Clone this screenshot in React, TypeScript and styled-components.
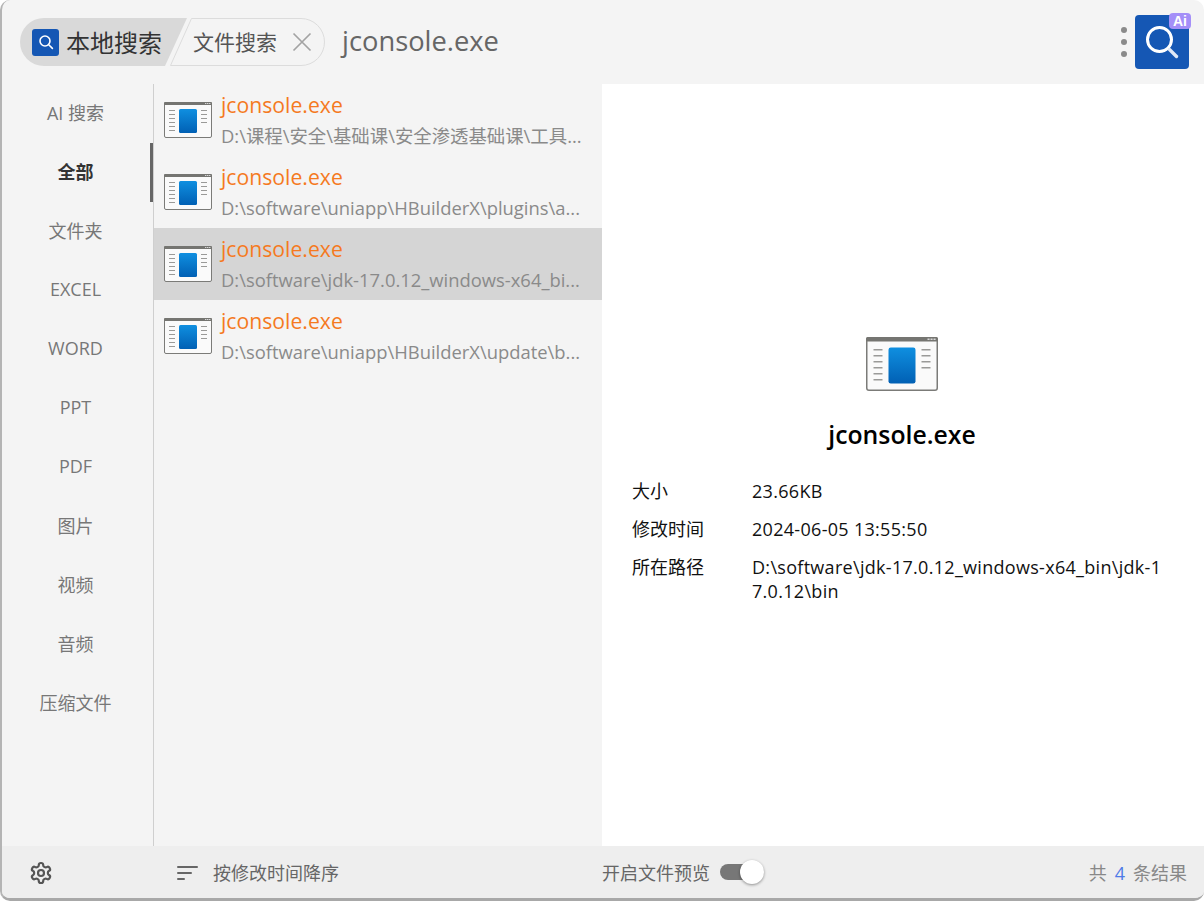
import styled, { createGlobalStyle } from 'styled-components';

const GlobalStyle = createGlobalStyle`
  html, body {
    margin: 0;
    padding: 0;
    background: #ffffff;
  }
  * {
    box-sizing: border-box;
  }
`;

const categories = ['AI 搜索', '全部', '文件夹', 'EXCEL', 'WORD', 'PPT', 'PDF', '图片', '视频', '音频', '压缩文件'];

const results = [
  { name: 'jconsole.exe', path: 'D:\\课程\\安全\\基础课\\安全渗透基础课\\工具...' },
  { name: 'jconsole.exe', path: 'D:\\software\\uniapp\\HBuilderX\\plugins\\a...' },
  { name: 'jconsole.exe', path: 'D:\\software\\jdk-17.0.12_windows-x64_bi...', selected: true },
  { name: 'jconsole.exe', path: 'D:\\software\\uniapp\\HBuilderX\\update\\b...' },
];

function ExeIcon({ width }: { width: number }) {
  return (
    <svg width={width} height={(width * 3) / 4} viewBox="0 0 48 36">
      <defs>
        <linearGradient id="exeBlue" x1="0" y1="0" x2="0" y2="1">
          <stop offset="0" stopColor="#0f8fe0" />
          <stop offset="1" stopColor="#0160b4" />
        </linearGradient>
      </defs>
      <rect x="0.5" y="0.5" width="47" height="35" rx="1.5" fill="#fafafa" stroke="#7b7b78" />
      <rect x="0" y="0" width="48" height="3" rx="1" fill="#757571" />
      <rect x="41" y="1" width="1.4" height="1" fill="#d8d8d8" />
      <rect x="43" y="1" width="1.4" height="1" fill="#d8d8d8" />
      <rect x="45" y="1" width="1.4" height="1" fill="#d8d8d8" />
      <rect x="15" y="7" width="18" height="24" rx="1.5" fill="url(#exeBlue)" />
      <g fill="#9a9a98">
        <rect x="5" y="8" width="6" height="1" />
        <rect x="5" y="12" width="6" height="1" />
        <rect x="5" y="16" width="6" height="1" />
        <rect x="5" y="20" width="6" height="1" />
        <rect x="5" y="24" width="6" height="1" />
        <rect x="5" y="28" width="6" height="1" />
        <rect x="37" y="8" width="6" height="1" />
        <rect x="37" y="12" width="6" height="1" />
        <rect x="37" y="16" width="6" height="1" />
        <rect x="37" y="20" width="6" height="1" />
      </g>
    </svg>
  );
}

export default function App() {
  return (
    <>
      <GlobalStyle />
      <Page>
        <Window>
          <Header>
            <Tabs>
              <LocalTab>
                <LocalBadge>
                  <svg width="18" height="18" viewBox="0 0 18 18" fill="none" stroke="#ffffff" strokeWidth="1.6" strokeLinecap="round">
                    <circle cx="8" cy="8" r="5" />
                    <path d="M12 12l3.4 3.4" />
                  </svg>
                </LocalBadge>
                <TabLabel>本地搜索</TabLabel>
              </LocalTab>
              <FileTab>
                <TabOutline width="156" height="48" viewBox="0 0 156 48" fill="none">
                  <path d="M22.5 .5H132a23.5 23.5 0 0 1 0 47H1.5Z" stroke="#dcdcdc" />
                </TabOutline>
                <TabLabel>文件搜索</TabLabel>
                <svg width="20" height="20" viewBox="0 0 20 20" stroke="#a3a3a3" strokeWidth="1.7">
                  <path d="M1.5 1.5l17 17M18.5 1.5l-17 17" />
                </svg>
              </FileTab>
            </Tabs>
            <Query>jconsole.exe</Query>
            <MoreDots>
              <span />
              <span />
              <span />
            </MoreDots>
            <AiButton>
              <svg width="36" height="36" viewBox="0 0 36 36" fill="none" stroke="#ffffff" strokeLinecap="round">
                <circle cx="15.5" cy="15.5" r="12" strokeWidth="3" />
                <path d="M25.5 25.5l7 7" strokeWidth="3.4" stroke="#dfe8f6" />
              </svg>
              <AiTag>Ai</AiTag>
            </AiButton>
          </Header>
          <Body>
            <Sidebar>
              {categories.map((name) => (
                <Category key={name} $active={name === '全部'}>
                  <CategoryLabel>{name}</CategoryLabel>
                </Category>
              ))}
            </Sidebar>
            <ResultList>
              {results.map((item) => (
                <ResultRow key={item.path} $selected={item.selected}>
                  <ExeIcon width={48} />
                  <ResultText>
                    <ResultName>{item.name}</ResultName>
                    <ResultPath>{item.path}</ResultPath>
                  </ResultText>
                </ResultRow>
              ))}
            </ResultList>
            <Preview>
              <ExeIcon width={72} />
              <PreviewTitle>jconsole.exe</PreviewTitle>
              <Meta>
                <dt>大小</dt>
                <dd>23.66KB</dd>
                <dt>修改时间</dt>
                <dd>2024-06-05 13:55:50</dd>
                <dt>所在路径</dt>
                <dd>D:\software\jdk-17.0.12_windows-x64_bin\jdk-17.0.12\bin</dd>
              </Meta>
            </Preview>
          </Body>
          <Footer>
            <SettingsSlot>
              <svg width="24" height="24" viewBox="0 0 24 24" fill="none" stroke="#555555" strokeWidth="2.2" strokeLinejoin="round">
                <path d="M12.22 2h-.44a2 2 0 0 0-2 2v.18a2 2 0 0 1-1 1.73l-.43.25a2 2 0 0 1-2 0l-.15-.08a2 2 0 0 0-2.73.73l-.22.38a2 2 0 0 0 .73 2.73l.15.1a2 2 0 0 1 1 1.72v.51a2 2 0 0 1-1 1.74l-.15.09a2 2 0 0 0-.73 2.73l.22.38a2 2 0 0 0 2.73.73l.15-.08a2 2 0 0 1 2 0l.43.25a2 2 0 0 1 1 1.73V20a2 2 0 0 0 2 2h.44a2 2 0 0 0 2-2v-.18a2 2 0 0 1 1-1.73l.43-.25a2 2 0 0 1 2 0l.15.08a2 2 0 0 0 2.73-.73l.22-.39a2 2 0 0 0-.73-2.73l-.15-.08a2 2 0 0 1-1-1.74v-.5a2 2 0 0 1 1-1.74l.15-.09a2 2 0 0 0 .73-2.73l-.22-.38a2 2 0 0 0-2.73-.73l-.15.08a2 2 0 0 1-2 0l-.43-.25a2 2 0 0 1-1-1.73V4a2 2 0 0 0-2-2z" />
                <circle cx="12" cy="12" r="3" />
              </svg>
            </SettingsSlot>
            <SortControl>
              <svg width="22" height="16" viewBox="0 0 22 16" fill="#666666">
                <rect x="0" y="2" width="21" height="2" rx="1" />
                <rect x="0" y="8" width="15" height="2" rx="1" />
                <rect x="0" y="14" width="8" height="2" rx="1" />
              </svg>
              按修改时间降序
            </SortControl>
            <PreviewToggle>
              开启文件预览
              <ToggleTrack>
                <ToggleKnob />
              </ToggleTrack>
            </PreviewToggle>
            <ResultCount>
              共<b>4</b>条结果
            </ResultCount>
          </Footer>
        </Window>
      </Page>
    </>
  );
}

const sansStack = `"Open Sans", "Noto Sans CJK SC", sans-serif`;

const Page = styled.div`
  width: 1204px;
  height: 903px;
  overflow: hidden;
  background: #ffffff;
  font-family: ${sansStack};
`;

const Window = styled.div`
  width: 1204px;
  height: 901px;
  display: flex;
  flex-direction: column;
  overflow: hidden;
  background: #f4f4f4;
  border-left: 2px solid #b4b4b4;
  border-bottom: 3px solid #a8a8a8;
  border-radius: 10px;
`;

const Header = styled.header`
  height: 84px;
  flex-shrink: 0;
  display: flex;
  align-items: center;
  padding: 0 15px 0 18px;
`;

const Tabs = styled.div`
  display: flex;
  align-items: center;
`;

const LocalTab = styled.div`
  width: 167px;
  height: 48px;
  display: flex;
  align-items: center;
  gap: 7px;
  padding-left: 12px;
  border-radius: 24px 0 0 24px;
  background: #d9d9d9;
  clip-path: polygon(0 0, 100% 0, 145px 100%, 0 100%);
  color: #333333;
  font-size: 24px;
`;

const LocalBadge = styled.span`
  width: 27px;
  height: 27px;
  display: flex;
  align-items: center;
  justify-content: center;
  border-radius: 3px;
  background: #1557b4;
`;

const FileTab = styled.div`
  position: relative;
  width: 156px;
  height: 48px;
  margin-left: -18px;
  display: flex;
  align-items: center;
  gap: 15px;
  padding-left: 24px;
  color: #555555;
  font-size: 21px;
`;

const TabOutline = styled.svg`
  position: absolute;
  top: 0;
  left: 0;
`;

const TabLabel = styled.span`
  margin-top: -2px;
  white-space: nowrap;
`;

const Query = styled.div`
  margin: -3px 0 0 17px;
  flex: 1;
  color: #666666;
  font-size: 27.3px;
`;

const MoreDots = styled.div`
  display: flex;
  flex-direction: column;
  gap: 6px;
  margin-right: 8px;

  span {
    width: 6px;
    height: 6px;
    border-radius: 50%;
    background: #8a8a8a;
  }
`;

const AiButton = styled.div`
  position: relative;
  width: 54px;
  height: 54px;
  display: flex;
  align-items: center;
  justify-content: center;
  border-radius: 4px;
  background: #1557b4;
`;

const AiTag = styled.span`
  position: absolute;
  top: -2px;
  right: -2px;
  width: 22px;
  height: 16px;
  display: flex;
  align-items: center;
  justify-content: center;
  border-radius: 4px;
  background: #a48ff8;
  color: #ffffff;
  font-size: 14px;
  font-weight: 700;
  font-family: "Liberation Sans", sans-serif;
`;

const Body = styled.main`
  height: 762px;
  flex-shrink: 0;
  display: flex;
`;

const Sidebar = styled.nav`
  width: 152px;
  flex-shrink: 0;
  display: flex;
  flex-direction: column;
  border-right: 1px solid #cfcfcf;
`;

const Category = styled.div<{ $active?: boolean }>`
  position: relative;
  height: 59px;
  flex-shrink: 0;
  display: flex;
  align-items: center;
  justify-content: center;
  padding-right: 4px;
  color: ${(p) => (p.$active ? '#333333' : '#777777')};
  font-size: 18px;
  font-weight: ${(p) => (p.$active ? 700 : 400)};

  ${(p) =>
    p.$active &&
    `&::after {
      content: '';
      position: absolute;
      right: 0;
      top: 0;
      width: 3px;
      height: 59px;
      background: #666666;
    }`}
`;

const CategoryLabel = styled.span`
  margin-top: -3px;
`;

const ResultList = styled.section`
  width: 448px;
  flex-shrink: 0;
  display: flex;
  flex-direction: column;
`;

const ResultRow = styled.div<{ $selected?: boolean }>`
  height: 72px;
  display: flex;
  align-items: center;
  gap: 9px;
  padding-left: 10px;
  background: ${(p) => (p.$selected ? '#d5d5d5' : 'transparent')};
`;

const ResultText = styled.div`
  min-width: 0;
  display: flex;
  flex-direction: column;
  gap: 6px;
`;

const ResultName = styled.div`
  color: #f57a1f;
  font-size: 21.2px;
  line-height: 26px;
`;

const ResultPath = styled.div`
  color: #8a8a8a;
  font-size: 18.4px;
  line-height: 24px;
  white-space: nowrap;
`;

const Preview = styled.section`
  flex: 1;
  display: flex;
  flex-direction: column;
  align-items: center;
  padding: 253px 32px 0 30px;
  background: #ffffff;
`;

const PreviewTitle = styled.h2`
  margin: 25px 0 0;
  color: #000000;
  font-size: 24.8px;
  line-height: 36px;
  font-weight: 600;
`;

const Meta = styled.dl`
  width: 100%;
  margin: 27px 0 0;
  display: grid;
  grid-template-columns: 120px 1fr;
  row-gap: 14px;
  color: #111111;
  font-size: 18px;
  line-height: 24px;

  dt,
  dd {
    margin: 0;
  }

  dd {
    padding-right: 8px;
    letter-spacing: 0.3px;
    word-break: break-all;
  }
`;

const Footer = styled.footer`
  height: 52px;
  flex-shrink: 0;
  display: flex;
  align-items: center;
  background: #eeeeee;
  font-size: 18px;
  color: #666666;
`;

const SettingsSlot = styled.div`
  width: 151px;
  flex-shrink: 0;
  display: flex;
  padding: 2px 0 0 27px;
`;

const SortControl = styled.div`
  width: 449px;
  flex-shrink: 0;
  display: flex;
  align-items: center;
  gap: 14px;
  padding-left: 24px;
`;

const PreviewToggle = styled.div`
  display: flex;
  align-items: center;
  gap: 10px;
`;

const ToggleTrack = styled.div`
  position: relative;
  width: 36px;
  height: 16px;
  border-radius: 8px;
  background: #777777;
`;

const ToggleKnob = styled.span`
  position: absolute;
  right: -8px;
  top: -4px;
  width: 24px;
  height: 24px;
  border-radius: 50%;
  background: #ffffff;
  box-shadow: 0 1px 3px rgba(0, 0, 0, 0.4);
`;

const ResultCount = styled.div`
  margin-left: auto;
  padding-right: 17px;
  color: #888888;

  b {
    margin: 0 8px;
    color: #4f7be8;
    font-weight: 400;
  }
`;
